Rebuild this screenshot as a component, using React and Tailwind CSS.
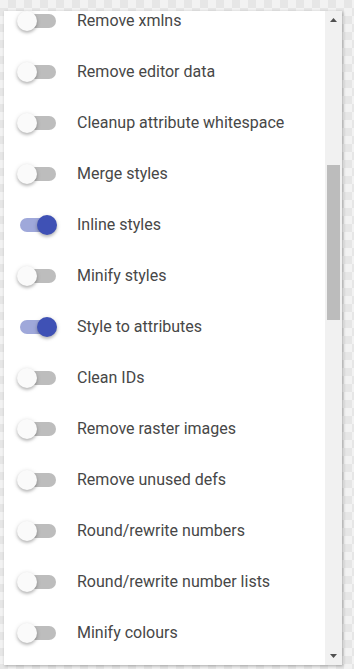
import { useState } from "react";

// Options shown in the panel, in order
const OPTIONS = [
  { label: "Remove xmlns", on: false },
  { label: "Remove editor data", on: false },
  { label: "Cleanup attribute whitespace", on: false },
  { label: "Merge styles", on: false },
  { label: "Inline styles", on: true },
  { label: "Minify styles", on: false },
  { label: "Style to attributes", on: true },
  { label: "Clean IDs", on: false },
  { label: "Remove raster images", on: false },
  { label: "Remove unused defs", on: false },
  { label: "Round/rewrite numbers", on: false },
  { label: "Round/rewrite number lists", on: false },
  { label: "Minify colours", on: false },
];

const Switch = ({ on, onToggle }) => (
  <button type="button" onClick={onToggle} className="relative w-[40px] h-[20px] shrink-0">
    <span className={`absolute left-[3px] top-[3px] w-[36px] h-[14px] rounded-full ${on ? "bg-[#9fa8da]" : "bg-[#bdbdbd]"}`} />
    <span
      className={`absolute top-0 w-[20px] h-[20px] rounded-full shadow-[0_2px_3px_rgba(0,0,0,0.2),0_1px_5px_rgba(0,0,0,0.14)] ${on ? "left-[20px] bg-[#3f51b5]" : "left-0 bg-[#fafafa]"}`}
    />
  </button>
);

const App = () => {
  const [opts, setOpts] = useState(OPTIONS);
  const toggle = (i) => setOpts(opts.map((o, j) => (j === i ? { ...o, on: !o.on } : o)));

  return (
    <div className="w-full h-[669px] pt-[11px] pl-[4px] bg-[repeating-conic-gradient(#e6e6e6_0_25%,#f2f2f2_0_50%)] bg-[length:16px_16px] font-['Roboto',sans-serif]">
      <div className="flex w-[338px] h-[654px] bg-white shadow-[1px_1px_3px_rgba(0,0,0,0.3)]">
        <div className="flex-1 overflow-hidden">
          <div className="-mt-[16px]">
            {opts.map((o, i) => (
              <div key={o.label} className="flex items-center h-[51px] pl-[13px]">
                <Switch on={o.on} onToggle={() => toggle(i)} />
                <span className="ml-[20px] text-[16px] font-normal text-[#474747] whitespace-nowrap">{o.label}</span>
              </div>
            ))}
          </div>
        </div>
        <div className="w-[17px] bg-[#f1f1f1] flex flex-col">
          <div className="h-[17px] flex items-center justify-center pt-[1px]">
            <svg width="7" height="4" viewBox="0 0 7 4"><path d="M3.5 0L7 4H0z" fill="#505050" /></svg>
          </div>
          <div className="flex-1 px-[2px]">
            <div className="mt-[137px] h-[155px] bg-[#bcbcbc]" />
          </div>
          <div className="h-[17px] flex items-center justify-center pb-[1px]">
            <svg width="7" height="4" viewBox="0 0 7 4"><path d="M0 0H7L3.5 4z" fill="#505050" /></svg>
          </div>
        </div>
      </div>
    </div>
  );
};

export default App;
